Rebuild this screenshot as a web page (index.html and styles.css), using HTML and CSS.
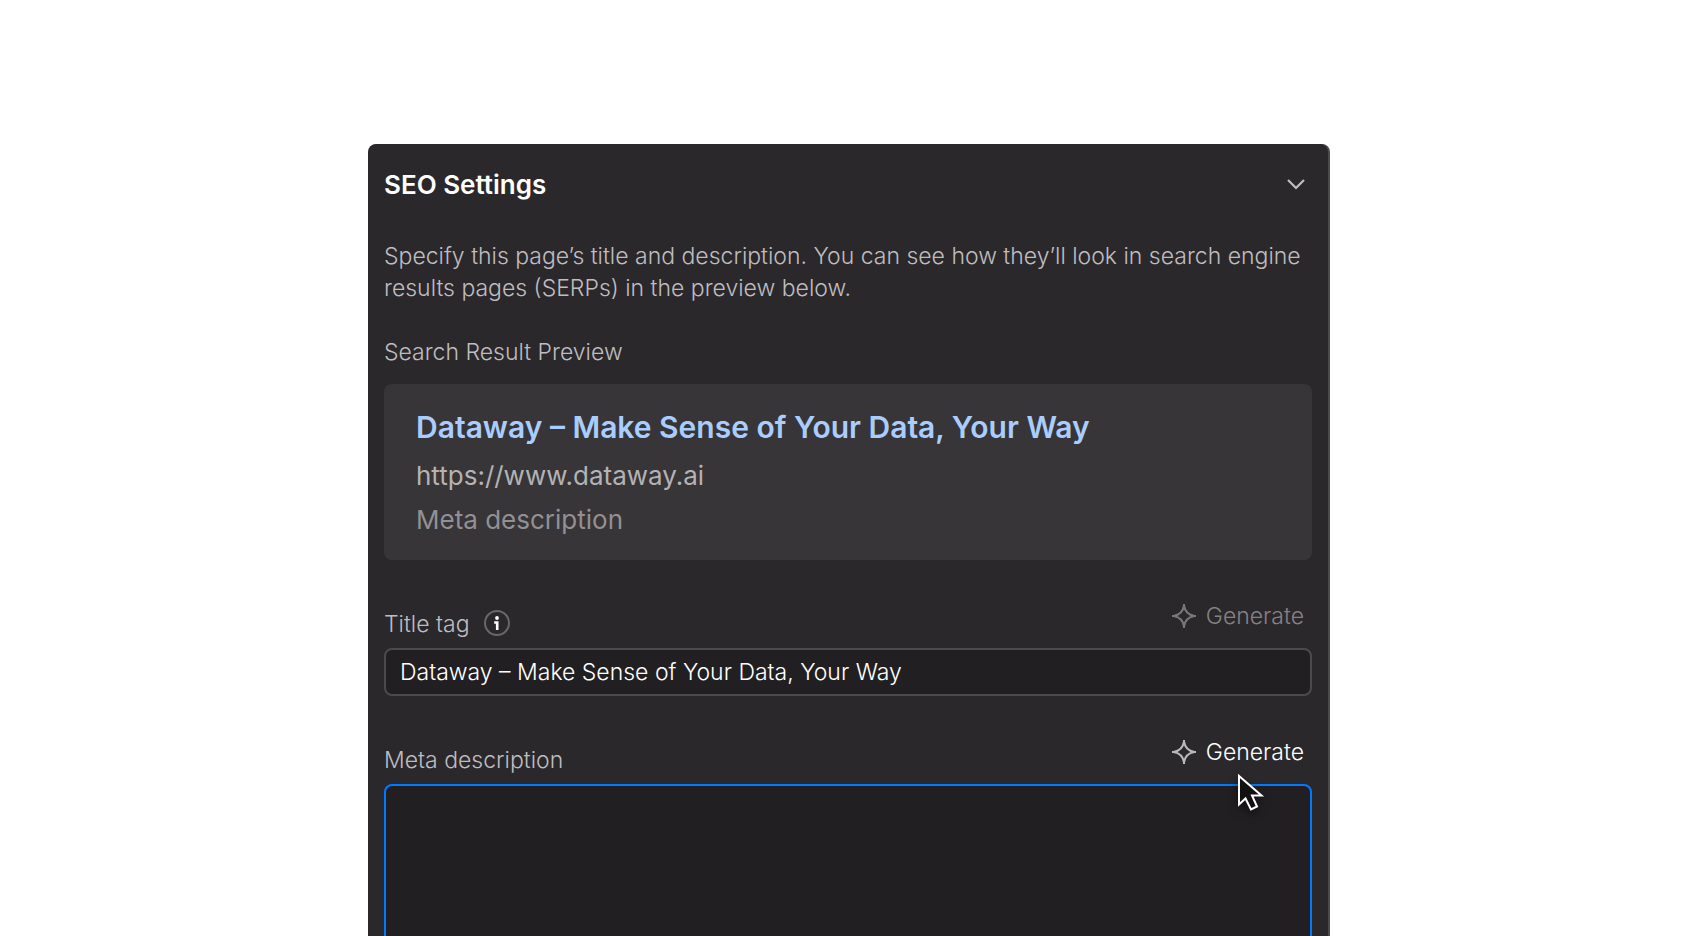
FILE: index.html
```html
<!DOCTYPE html>
<html lang="en">
<head>
    <meta charset="UTF-8">
    <meta name="viewport" content="width=device-width, initial-scale=1.0">
    <title>SEO Settings</title>
    <link rel="stylesheet" href="styles.css">
</head>
<body>
    <main class="panel">
        <header class="panel-header">
            <h1>SEO Settings</h1>
            <button type="button" class="toggle" aria-label="Collapse section">
                <svg width="32" height="32" viewBox="0 0 32 32" fill="none" stroke="currentColor" stroke-width="2.2">
                    <path d="M8 12l8 8 8-8"/>
                </svg>
            </button>
        </header>

        <p class="intro">Specify this page’s title and description. You can see how they’ll look in search engine results pages (SERPs) in the preview below.</p>

        <h2>Search Result Preview</h2>
        <section class="preview">
            <a href="#" class="preview-title">Dataway – Make Sense of Your Data, Your Way</a>
            <div class="preview-url">https://www.dataway.ai</div>
            <div class="preview-description">Meta description</div>
        </section>

        <div class="field">
            <div class="field-header">
                <label for="titleTag">Title tag</label>
                <button type="button" class="info" aria-label="About the title tag">
                    <svg width="26" height="26" viewBox="0 0 26 26" fill="none">
                        <circle cx="13" cy="13" r="12" stroke="#69676a" stroke-width="2"/>
                        <circle cx="13" cy="8" r="1.9" fill="#fff"/>
                        <path d="M10.2 12.5h3V20" stroke="#fff" stroke-width="2.6"/>
                    </svg>
                </button>
                <button type="button" class="generate" disabled>
                    <svg width="24" height="24" viewBox="0 0 24 24" fill="none" stroke="currentColor" stroke-width="2">
                        <path d="M12 1.5C13 8 16 11 22.5 12C16 13 13 16 12 22.5C11 16 8 13 1.5 12C8 11 11 8 12 1.5z" stroke-linejoin="bevel"/>
                        <path d="M12 0v3M12 21v3M0 12h3M21 12h3"/>
                    </svg>
                    Generate
                </button>
            </div>
            <input type="text" id="titleTag" class="input-field" value="Dataway – Make Sense of Your Data, Your Way">
        </div>

        <div class="field">
            <div class="field-header">
                <label for="metaDescription">Meta description</label>
                <button type="button" class="generate">
                    <svg width="24" height="24" viewBox="0 0 24 24" fill="none" stroke="currentColor" stroke-width="2">
                        <path d="M12 1.5C13 8 16 11 22.5 12C16 13 13 16 12 22.5C11 16 8 13 1.5 12C8 11 11 8 12 1.5z" stroke-linejoin="bevel"/>
                        <path d="M12 0v3M12 21v3M0 12h3M21 12h3"/>
                    </svg>
                    Generate
                </button>
            </div>
            <textarea id="metaDescription" class="input-field active"></textarea>
            <!-- Mouse pointer over the generate button -->
            <svg class="cursor" width="28" height="40" viewBox="0 0 28 40">
                <path d="M2 3V31.5L8.5 25.5L14 36.5L20 33.5L15 22.5H24.5z" fill="#111" stroke="#fff" stroke-width="2"/>
            </svg>
        </div>
    </main>
</body>
</html>
```

FILE: styles.css
```css
* {
    box-sizing: border-box;
}
body {
    font-family: 'Inter', sans-serif;
    font-size: 23px;
    font-weight: 300;
    line-height: 32px;
    height: 100vh;
    margin: 0;
    background-color: #fff;
    color: #bfbdc0;
    overflow: hidden;
}
h1, h2, p {
    margin: 0;
}
button {
    font: inherit;
    color: inherit;
    background: none;
    border: none;
    padding: 0;
    cursor: pointer;
}
svg {
    display: block;
}
.panel {
    max-width: 960px;
    margin: 144px auto 0;
    padding: 0 16px 32px;
    background-color: #2b282b;
    border-radius: 8px;
    box-shadow: 2px 0 0 #4c4a4d; /* Light right edge */
}
.panel-header {
    display: flex;
    align-items: center;
    justify-content: space-between;
    height: 80px;
    margin-bottom: 16px;
}
h1 {
    padding-top: 2px;
    font-size: 26px;
    font-weight: 600;
    color: #fff;
}
h2 {
    margin-top: 32px;
    font-size: 23px;
    font-weight: 300;
}
.preview {
    margin-top: 16px;
    padding: 20px 32px 18px;
    background-color: #373537;
    border-radius: 8px;
    font-size: 26px;
    font-weight: 400;
}
.preview-title {
    display: block;
    padding-bottom: 4px;
    font-size: 30px;
    line-height: 46px;
    font-weight: 600;
    color: #a9cdff;
    text-decoration: none;
}
.preview-url,
.preview-description {
    line-height: 44px;
}
.preview-url {
    color: #b4b2b5;
}
.preview-description {
    color: #929093;
}
.field {
    position: relative;
    margin-top: 32px;
}
.field-header {
    display: flex;
    align-items: flex-end;
    margin-bottom: 8px;
}
.info {
    margin: 0 0 4px 14px;
}
.generate {
    display: flex;
    align-items: center;
    gap: 10px;
    height: 48px;
    margin-left: auto;
    padding: 0 8px;
    color: #fff;
}
.generate svg {
    color: #b9b7ba;
}
.generate:disabled {
    color: #848285;
    cursor: default;
}
.generate:disabled svg {
    color: #79777a;
}
.input-field {
    display: block;
    width: 100%;
    height: 48px;
    padding: 0 14px;
    border: 2px solid #4c4a4d;
    border-radius: 8px;
    background-color: #221f22;
    color: #fff;
    font: inherit;
    outline: none;
}
textarea.input-field {
    height: 240px;
    padding: 8px 14px;
    resize: none;
}
.input-field.active {
    border-color: #007bff;
}
.cursor {
    position: absolute;
    top: 45px;
    right: 47px;
    filter: drop-shadow(0 4px 4px rgba(0, 0, 0, 0.5));
}
```
